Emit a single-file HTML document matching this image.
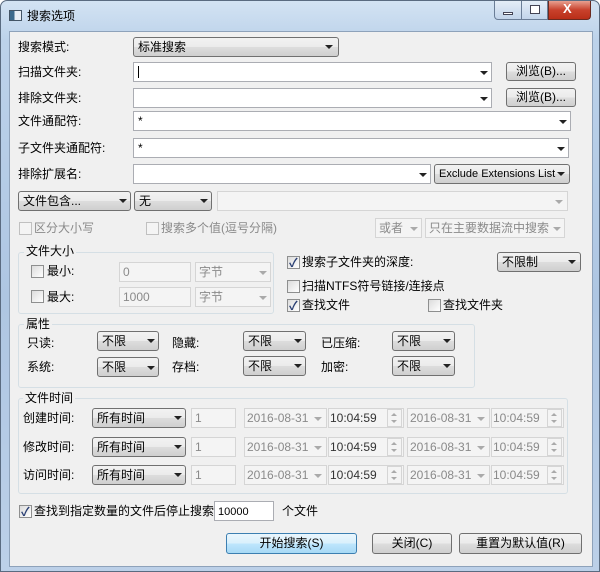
<!DOCTYPE html>
<html><head><meta charset="utf-8"><style>
*{box-sizing:border-box;margin:0;padding:0}
body{width:600px;height:572px;overflow:hidden;background:#fff;font-family:"Liberation Sans","Noto Sans CJK SC",sans-serif;font-size:12px;color:#000}
#win{position:absolute;left:0;top:0;width:600px;height:572px;border:1px solid #5a6b80;border-radius:7px 7px 0 0;background:linear-gradient(#d3e3f3,#bcd2ea 40px,#aec6e2 300px,#bcd0e8);}
#client{position:absolute;left:8px;top:30px;width:584px;height:536px;background:#f0f0f0;border:1px solid #8ea2ba}
.a{position:absolute;white-space:nowrap;line-height:14px}
.in{position:absolute;background:#fff;border:1px solid #abadb3;height:20px}
.dis{background:#f4f4f4;border-color:#d5d5d5;color:#8a8a8a}
.cb{position:absolute;height:20px;border:1px solid #707070;border-radius:3px;background:linear-gradient(#f2f2f2,#ebebeb 50%,#dddddd 51%,#cfcfcf);padding:2px 4px;line-height:15px}
.arr{position:absolute;width:0;height:0;border-left:4px solid transparent;border-right:4px solid transparent;border-top:4px solid #222}
.ga{border-top-color:#aaa}
.sp{position:absolute;width:15px;height:18px;border:1px solid #d5d5d5;background:#f4f4f4}
.sp::before,.sp::after{content:"";position:absolute;left:3px;border-left:3px solid transparent;border-right:3px solid transparent}
.sp::before{top:3px;border-bottom:3px solid #aaa}
.sp::after{top:10px;border-top:3px solid #aaa}
.btn{position:absolute;border:1px solid #707070;border-radius:3px;background:linear-gradient(#f2f2f2,#ebebeb 50%,#dddddd 51%,#cfcfcf);text-align:center;line-height:17px}
.chk{position:absolute;width:13px;height:13px;border:1px solid #8e8f8f;background:linear-gradient(135deg,#dcdcdc,#fff)}
.chk.on::after{content:"✓";position:absolute;left:1px;top:-3px;font-size:12px;color:#2a3f73;font-weight:bold}
.grp{position:absolute;border:1px solid #d5dfe5;border-radius:3px}
.gl{position:absolute;background:#f0f0f0;padding:0 2px;line-height:14px}
.g{color:#8a8a8a}
</style></head><body>
<div id="win">
 <div style="position:absolute;left:8px;top:9px;width:13px;height:11px;background:linear-gradient(90deg,#3d6a8c 40%,#e8eef5 40%);border:1px solid #456"></div>
 <div class="a" style="left:26px;top:8px">搜索选项</div>
 <div style="position:absolute;left:493px;top:0;width:54px;height:19px;border:1px solid #6a7d96;border-top:none;border-radius:0 0 0 4px;background:linear-gradient(#e4edf7,#c2d4ea)"></div>
 <div style="position:absolute;left:520px;top:0;width:1px;height:19px;background:#6a7d96"></div>
 <div style="position:absolute;left:502px;top:11px;width:10px;height:3px;background:#fff;border:1px solid #445"></div>
 <div style="position:absolute;left:529px;top:4px;width:10px;height:9px;background:#fff;border:1px solid #445"></div>
 <div style="position:absolute;left:547px;top:0;width:43px;height:19px;border:1px solid #6a2a20;border-top:none;border-radius:0 0 4px 0;background:linear-gradient(#e8a090,#c8412c 50%,#b92e18)"></div>
 <div class="a" style="left:562px;top:1px;color:#fff;font-weight:bold;font-size:13px">X</div>
 <div id="client"></div>
</div>

<div class="a" style="left:18px;top:40px">搜索模式:</div>
<div class="cb" style="left:133px;top:37px;width:206px">标准搜索</div><div class="arr" style="left:325px;top:45px"></div>

<div class="a" style="left:18px;top:65px">扫描文件夹:</div>
<div class="in" style="left:133px;top:62px;width:359px"><span style="position:absolute;left:4px;top:3px;width:1px;height:12px;background:#000"></span></div><div class="arr" style="left:480px;top:71px"></div>
<div class="btn" style="left:506px;top:62px;width:70px;height:19px">浏览(B)...</div>

<div class="a" style="left:18px;top:91px">排除文件夹:</div>
<div class="in" style="left:133px;top:88px;width:359px"></div><div class="arr" style="left:480px;top:97px"></div>
<div class="btn" style="left:506px;top:88px;width:70px;height:19px">浏览(B)...</div>

<div class="a" style="left:18px;top:114px">文件通配符:</div>
<div class="in" style="left:133px;top:111px;width:438px"><span class="a" style="left:4px;top:2px">*</span></div><div class="arr" style="left:559px;top:120px"></div>

<div class="a" style="left:18px;top:141px">子文件夹通配符:</div>
<div class="in" style="left:133px;top:138px;width:436px"><span class="a" style="left:4px;top:2px">*</span></div><div class="arr" style="left:557px;top:147px"></div>

<div class="a" style="left:18px;top:167px">排除扩展名:</div>
<div class="in" style="left:133px;top:164px;width:298px"></div><div class="arr" style="left:419px;top:173px"></div>
<div class="cb" style="left:434px;top:164px;width:136px;font-size:11px">Exclude Extensions List</div><div class="arr" style="left:557px;top:172px"></div>

<div class="cb" style="left:18px;top:191px;width:113px">文件包含...</div><div class="arr" style="left:119px;top:199px"></div>
<div class="cb" style="left:134px;top:191px;width:78px">无</div><div class="arr" style="left:200px;top:199px"></div>
<div class="in dis" style="left:217px;top:191px;width:351px"></div><div class="arr ga" style="left:555px;top:200px"></div>

<div class="chk" style="left:19px;top:222px;border-color:#c0c0c0;background:#f4f4f4"></div><div class="a g" style="left:34px;top:221px">区分大小写</div>
<div class="chk" style="left:146px;top:222px;border-color:#c0c0c0;background:#f4f4f4"></div><div class="a g" style="left:161px;top:221px">搜索多个值(逗号分隔)</div>
<div class="in dis" style="left:375px;top:218px;width:47px"><span class="a" style="left:3px;top:2px">或者</span></div><div class="arr ga" style="left:410px;top:227px"></div>
<div class="in dis" style="left:425px;top:218px;width:140px"><span class="a" style="left:3px;top:2px">只在主要数据流中搜索</span></div><div class="arr ga" style="left:553px;top:227px"></div>

<div class="grp" style="left:18px;top:252px;width:256px;height:62px"></div>
<div class="gl" style="left:24px;top:244px">文件大小</div>
<div class="chk" style="left:31px;top:265px"></div><div class="a" style="left:47px;top:264px">最小:</div>
<div class="in dis" style="left:119px;top:262px;width:72px"><span class="a" style="left:3px;top:2px">0</span></div>
<div class="in dis" style="left:195px;top:262px;width:76px"><span class="a" style="left:3px;top:2px">字节</span></div><div class="arr ga" style="left:259px;top:271px"></div>
<div class="chk" style="left:31px;top:290px"></div><div class="a" style="left:47px;top:290px">最大:</div>
<div class="in dis" style="left:119px;top:287px;width:72px"><span class="a" style="left:3px;top:2px">1000</span></div>
<div class="in dis" style="left:195px;top:287px;width:76px"><span class="a" style="left:3px;top:2px">字节</span></div><div class="arr ga" style="left:259px;top:296px"></div>

<div class="chk on" style="left:287px;top:256px"></div><div class="a" style="left:302px;top:255px">搜索子文件夹的深度:</div>
<div class="cb" style="left:497px;top:252px;width:84px">不限制</div><div class="arr" style="left:568px;top:260px"></div>
<div class="chk" style="left:287px;top:280px"></div><div class="a" style="left:302px;top:279px">扫描NTFS符号链接/连接点</div>
<div class="chk on" style="left:287px;top:299px"></div><div class="a" style="left:302px;top:298px">查找文件</div>
<div class="chk" style="left:428px;top:299px"></div><div class="a" style="left:443px;top:298px">查找文件夹</div>

<div class="grp" style="left:18px;top:324px;width:457px;height:64px"></div>
<div class="gl" style="left:24px;top:317px">属性</div>
<div class="a" style="left:27px;top:336px">只读:</div><div class="cb" style="left:97px;top:331px;width:62px">不限</div><div class="arr" style="left:147px;top:339px"></div>
<div class="a" style="left:172px;top:336px">隐藏:</div><div class="cb" style="left:243px;top:331px;width:63px">不限</div><div class="arr" style="left:294px;top:339px"></div>
<div class="a" style="left:321px;top:336px">已压缩:</div><div class="cb" style="left:392px;top:331px;width:63px">不限</div><div class="arr" style="left:443px;top:339px"></div>
<div class="a" style="left:27px;top:360px">系统:</div><div class="cb" style="left:97px;top:357px;width:62px">不限</div><div class="arr" style="left:147px;top:366px"></div>
<div class="a" style="left:172px;top:360px">存档:</div><div class="cb" style="left:243px;top:356px;width:63px">不限</div><div class="arr" style="left:294px;top:364px"></div>
<div class="a" style="left:321px;top:360px">加密:</div><div class="cb" style="left:392px;top:356px;width:63px">不限</div><div class="arr" style="left:443px;top:364px"></div>

<div class="grp" style="left:18px;top:398px;width:550px;height:96px"></div>
<div class="gl" style="left:23px;top:391px">文件时间</div>

<div class="a" style="left:23px;top:411px">创建时间:</div>
<div class="cb" style="left:92px;top:408px;width:94px">所有时间</div><div class="arr" style="left:174px;top:416px"></div>
<div class="in dis" style="left:191px;top:408px;width:45px"><span class="a" style="left:3px;top:2px">1</span></div>
<div class="in dis" style="left:244px;top:408px;width:83px"><span class="a" style="left:2px;top:2px">2016-08-31</span></div><div class="arr ga" style="left:314px;top:417px"></div>
<div class="in dis" style="left:328px;top:408px;width:76px"><span class="a" style="left:1px;top:2px;color:#333">10:04:59</span></div><div class="sp" style="left:387px;top:409px"></div>
<div class="in dis" style="left:407px;top:408px;width:83px"><span class="a" style="left:2px;top:2px">2016-08-31</span></div><div class="arr ga" style="left:477px;top:417px"></div>
<div class="in dis" style="left:491px;top:408px;width:73px"><span class="a" style="left:1px;top:2px">10:04:59</span></div><div class="sp" style="left:547px;top:409px"></div>

<div class="a" style="left:23px;top:440px">修改时间:</div>
<div class="cb" style="left:92px;top:437px;width:94px">所有时间</div><div class="arr" style="left:174px;top:445px"></div>
<div class="in dis" style="left:191px;top:437px;width:45px"><span class="a" style="left:3px;top:2px">1</span></div>
<div class="in dis" style="left:244px;top:437px;width:83px"><span class="a" style="left:2px;top:2px">2016-08-31</span></div><div class="arr ga" style="left:314px;top:446px"></div>
<div class="in dis" style="left:328px;top:437px;width:76px"><span class="a" style="left:1px;top:2px;color:#333">10:04:59</span></div><div class="sp" style="left:387px;top:438px"></div>
<div class="in dis" style="left:407px;top:437px;width:83px"><span class="a" style="left:2px;top:2px">2016-08-31</span></div><div class="arr ga" style="left:477px;top:446px"></div>
<div class="in dis" style="left:491px;top:437px;width:73px"><span class="a" style="left:1px;top:2px">10:04:59</span></div><div class="sp" style="left:547px;top:438px"></div>

<div class="a" style="left:23px;top:468px">访问时间:</div>
<div class="cb" style="left:92px;top:465px;width:94px">所有时间</div><div class="arr" style="left:174px;top:473px"></div>
<div class="in dis" style="left:191px;top:465px;width:45px"><span class="a" style="left:3px;top:2px">1</span></div>
<div class="in dis" style="left:244px;top:465px;width:83px"><span class="a" style="left:2px;top:2px">2016-08-31</span></div><div class="arr ga" style="left:314px;top:474px"></div>
<div class="in dis" style="left:328px;top:465px;width:76px"><span class="a" style="left:1px;top:2px;color:#333">10:04:59</span></div><div class="sp" style="left:387px;top:466px"></div>
<div class="in dis" style="left:407px;top:465px;width:83px"><span class="a" style="left:2px;top:2px">2016-08-31</span></div><div class="arr ga" style="left:477px;top:474px"></div>
<div class="in dis" style="left:491px;top:465px;width:73px"><span class="a" style="left:1px;top:2px">10:04:59</span></div><div class="sp" style="left:547px;top:466px"></div>

<div class="chk on" style="left:19px;top:505px"></div><div class="a" style="left:34px;top:504px">查找到指定数量的文件后停止搜索.</div>
<div class="in" style="left:214px;top:501px;width:60px"><span class="a" style="left:3px;top:3px;font-size:11px">10000</span></div>
<div class="a" style="left:282px;top:504px">个文件</div>

<div class="btn" style="left:226px;top:533px;width:131px;height:21px;border-color:#3c7fb1;background:linear-gradient(#eaf6fd,#d9f0fc 50%,#bee6fd 51%,#a7d9f5);line-height:19px">开始搜索(S)</div>
<div class="btn" style="left:372px;top:533px;width:80px;height:21px;line-height:19px">关闭(C)</div>
<div class="btn" style="left:459px;top:533px;width:123px;height:21px;line-height:19px">重置为默认值(R)</div>
</body></html>
